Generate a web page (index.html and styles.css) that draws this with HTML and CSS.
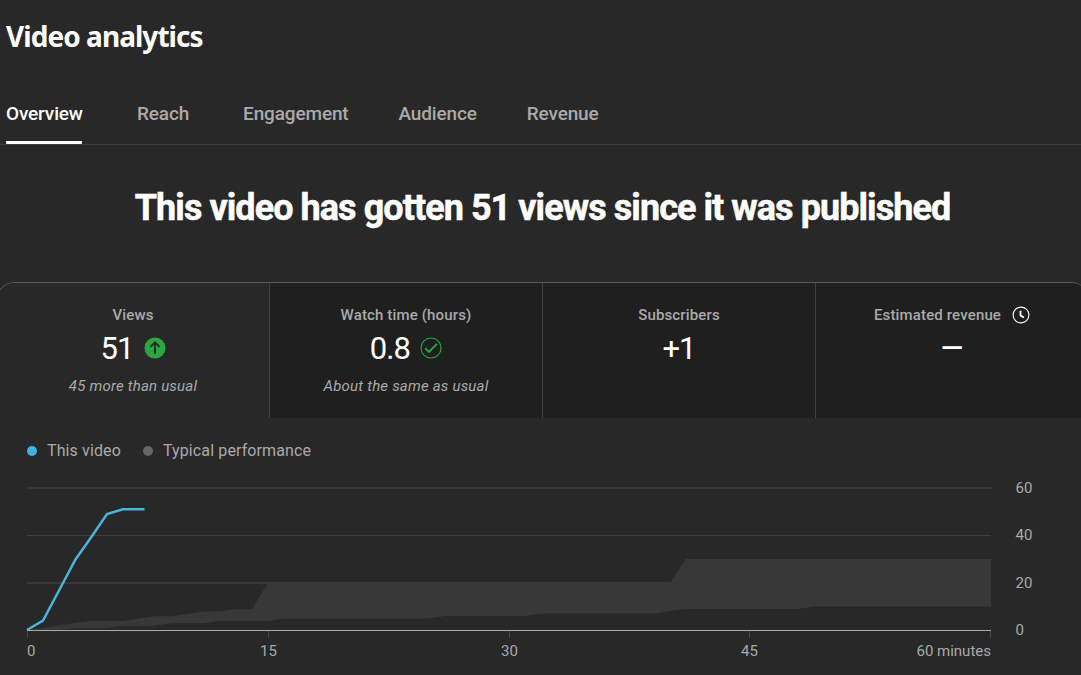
FILE: index.html
```html
<!DOCTYPE html>
<html lang="en">
<head>
  <meta charset="UTF-8" />
  <meta name="viewport" content="width=device-width, initial-scale=1.0"/>
  <title>Video analytics</title>
  <link rel="stylesheet" href="styles.css">
</head>
<body>
  <header>
    <h1>Video analytics</h1>
  </header>

  <nav class="tabs">
    <a class="tab active">Overview</a>
    <a class="tab">Reach</a>
    <a class="tab">Engagement</a>
    <a class="tab close">Audience</a>
    <a class="tab close">Revenue</a>
  </nav>

  <main>
    <h2>This video has gotten 51 views since it was published</h2>

    <div class="metrics">
      <div class="metric selected">
        <div class="metric-name">Views</div>
        <div class="metric-value">
          <span>51</span>
          <svg class="icon" width="22" height="22" viewBox="0 0 22 22">
            <circle cx="11" cy="11" r="10.5" fill="#2ba640"/>
            <path d="M11 17V5.5M6.5 9.8L11 5.3l4.500 4.500" fill="none" stroke="#282828" stroke-width="1.900"/>
          </svg>
        </div>
        <div class="metric-note">45 more than usual</div>
      </div>
      <div class="metric">
        <div class="metric-name">Watch time (hours)</div>
        <div class="metric-value">
          <span>0.8</span>
          <svg class="icon" width="22" height="22" viewBox="0 0 22 22">
            <circle cx="11" cy="11" r="10" fill="none" stroke="#2ba640" stroke-width="1.100"/>
            <path d="M5.300 11.200l3.700 3.700L17 6.900" fill="none" stroke="#2ba640" stroke-width="2"/>
          </svg>
        </div>
        <div class="metric-note">About the same as usual</div>
      </div>
      <div class="metric">
        <div class="metric-name">Subscribers</div>
        <div class="metric-value"><span>+1</span></div>
      </div>
      <div class="metric">
        <div class="metric-name">
          Estimated revenue
          <svg class="icon" width="18" height="18" viewBox="0 0 18 18">
            <circle cx="9" cy="9" r="7.900" fill="none" stroke="#fff" stroke-width="1.100"/>
            <path d="M8.500 4.800v4.700l3.400 2.100" fill="none" stroke="#fff" stroke-width="1.800"/>
          </svg>
        </div>
        <div class="metric-value"><span class="dash">—</span></div>
      </div>
    </div>

    <div class="legend">
      <span class="dot this-video"></span>
      <span>This video</span>
      <span class="dot typical"></span>
      <span>Typical performance</span>
    </div>

    <svg class="chart" width="1081" height="205" viewBox="0 470 1081 205">
      <g class="grid">
        <path d="M27 488H991" stroke-width="2"/>
        <path d="M27 535.500H991" stroke="#404040"/>
        <path d="M27 583H991" stroke-width="2"/>
      </g>
      <path class="range" d="M27 630L43 628L59 625.500L75 623L91 621H123L139 618.500L155 616.200H171L187 614L203 611.500H219L235 609.200H252L268 583H670L686 559H991V606.500H814L798 609H686L670 611L655 613.500H541L525 616H445L429 618.600H284L268 621H219L203 623.300H171L155 625.700H123L107 628H75L59 630Z"/>
      <path class="axis" d="M27 630.500H991"/>
      <path class="ticks" d="M27.500 631v7M268.500 631v7M509.500 631v7M749.500 631v7M990.500 631v7"/>
      <path class="line" d="M27 630L43 620.500L59 590.500L75.500 559.500L91 537.500L107 514L123 509.200H144.500"/>

      <g class="labels">
        <text x="27" y="656">0</text>
        <text x="268.500" y="656" text-anchor="middle">15</text>
        <text x="509.500" y="656" text-anchor="middle">30</text>
        <text x="749.500" y="656" text-anchor="middle">45</text>
        <text x="991" y="656" text-anchor="end">60 minutes</text>
        <text x="1015.500" y="493">60</text>
        <text x="1015.500" y="540">40</text>
        <text x="1015.500" y="588">20</text>
        <text x="1015.500" y="635">0</text>
      </g>
    </svg>
  </main>
</body>
</html>
```
FILE: styles.css
```css
body {
  font-family: Roboto, sans-serif;
  margin: 0;
  background: #282828;
  color: #fff;
  overflow: hidden;
}

header {
  height: 84px;
  padding-left: 6px;
}

h1 {
  margin: 0;
  font-family: "Noto Sans", sans-serif;
  font-size: 28px;
  font-weight: 700;
  line-height: 72px;
  letter-spacing: -0.95px;
}

.tabs {
  display: flex;
  gap: 54px;
  height: 60px;
  padding-left: 6px;
  border-bottom: 1px solid #414141;
}

.tab {
  box-sizing: border-box;
  height: 60px;
  color: #aaa;
  font-size: 19px;
  font-weight: 500;
  line-height: 59px;
  letter-spacing: -0.15px;
  white-space: nowrap;
}

.tab.active {
  width: 76px;
  margin-right: 1px;
  color: #fff;
  border-bottom: 3px solid #fff;
  border-radius: 1px;
}

.tab.close {
  margin-left: -4px;
}

h2 {
  margin: 0;
  height: 137px;
  padding-left: 4px;
  font-size: 36px;
  font-weight: 700;
  line-height: 126px;
  text-align: center;
  letter-spacing: -0.94px;
  white-space: nowrap;
  -webkit-text-stroke: 0.5px #fff;
}

.metrics {
  display: grid;
  grid-template-columns: repeat(4, 273px);
  box-sizing: border-box;
  width: 1094px;
  height: 136px;
  margin-left: -4px;
  border: 1px solid #5a5a5a;
  border-bottom: 0;
  border-radius: 19px 19px 0 0;
  overflow: hidden;
}

.metric {
  box-sizing: border-box;
  padding-top: 22px;
  border-right: 1px solid #414141;
  background: #1f1f1f;
  text-align: center;
}

.metric.selected {
  background: #282828;
}

.metric-name {
  display: flex;
  justify-content: center;
  align-items: center;
  gap: 11px;
  height: 20px;
  color: #aaa;
  font-size: 15px;
  font-weight: 500;
  letter-spacing: 0.15px;
}

.metric-value {
  display: flex;
  justify-content: center;
  align-items: center;
  gap: 10px;
  height: 46px;
  font-size: 31px;
  letter-spacing: -0.9px;
}

.metric-value .dash {
  font-weight: 500;
  font-size: 29px;
  letter-spacing: 0;
}

.metric-note {
  height: 30px;
  color: #aaa;
  font-size: 15px;
  font-style: italic;
  line-height: 30px;
  letter-spacing: 0.2px;
}

.legend {
  display: flex;
  align-items: center;
  height: 52px;
  padding: 13px 0 0 27px;
  box-sizing: border-box;
  color: #aaa;
  font-size: 16px;
  letter-spacing: 0.12px;
}

.dot {
  width: 10px;
  height: 10px;
  margin-right: 10px;
  border-radius: 50%;
}

.dot.this-video {
  background: #40b4de;
}

.dot.typical {
  margin-left: 22px;
  background: #666;
}

.chart {
  display: block;
}

.grid {
  stroke: #383838;
}

.range {
  fill: #383838;
}

.axis {
  stroke: #aaa;
}

.ticks {
  fill: none;
  stroke: #484848;
}

.line {
  fill: none;
  stroke: #4ab4d9;
  stroke-width: 2.5;
}

.labels {
  fill: #aaa;
  font-size: 15px;
}
```
